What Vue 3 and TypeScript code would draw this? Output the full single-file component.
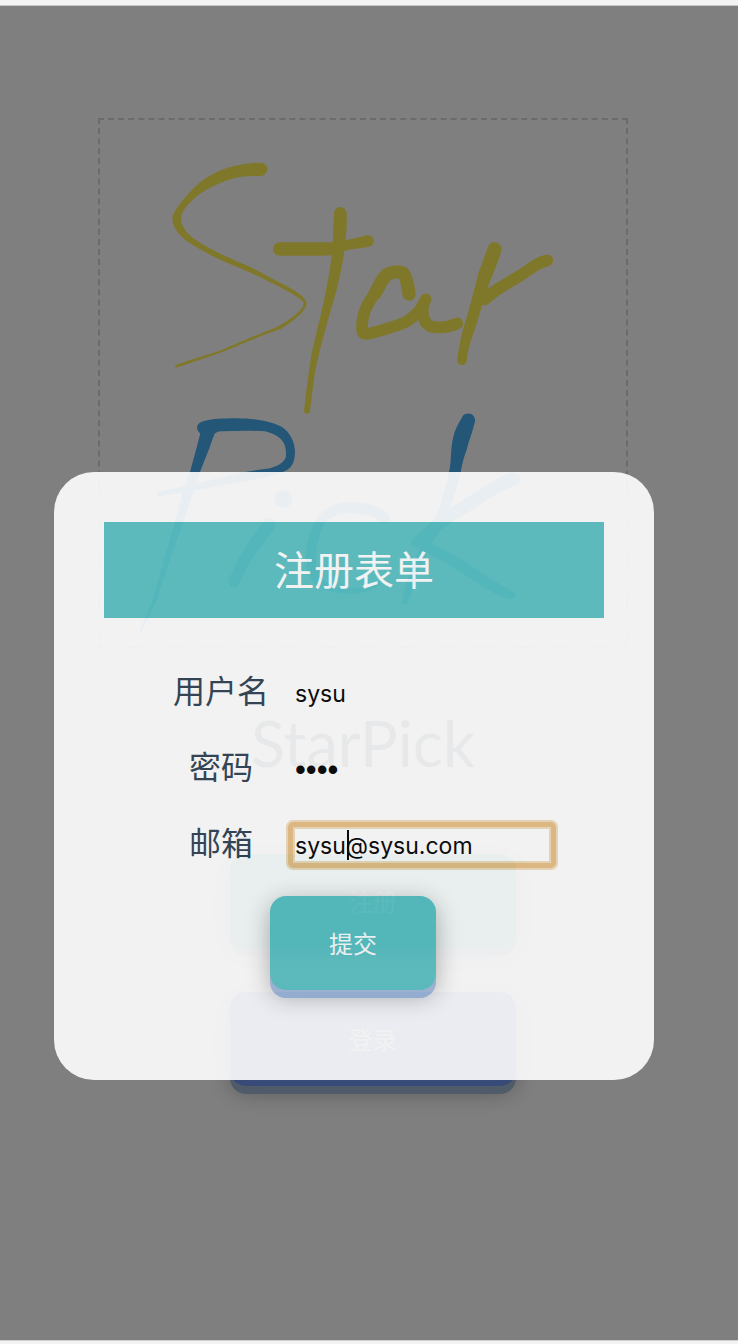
<script setup lang="ts">
import { onMounted, ref } from 'vue'

interface Field {
  id: string
  label: string
  type: string
  value: string
}

const fields = ref<Field[]>([
  { id: 'username', label: '用户名', type: 'text', value: 'sysu' },
  { id: 'password', label: '密码', type: 'password', value: 'sysu' },
  { id: 'email', label: '邮箱', type: 'text', value: 'sysu@sysu.com' },
])

const active = ref('email')

onMounted(() => {
  const input = document.getElementById(active.value) as HTMLInputElement | null
  input?.focus()
  input?.setSelectionRange(4, 4)
})
</script>

<template>
  <div class="app">
    <div class="strip strip-top"></div>
    <main class="page">
      <section class="home">
        <div class="logo">
          <svg viewBox="0 0 1578 1578" role="img" aria-label="StarPick">
            <g fill="#fff056" stroke="none">
              <g transform="translate(-30 -60)">
                <path d="M512 188C420 190 355 220 308 267C270 308 247 338 247 355C247 385 270 410 300 430C370 475 440 500 490 522C540 548 590 568 625 594C638 603 641 606 641 611C636 635 600 658 562 680C520 696 440 730 390 752L300 780L258 794A4 4 0 0 0 262 802L300 790L395 757C460 730 510 708 572 687C612 663 650 632 650 610C650 595 625 578 590 558C550 540 510 515 480 500C420 475 360 450 310 415C285 395 273 375 273 355C275 330 300 305 332 280C380 250 430 231 470 229L512 228A20 20 0 0 0 512 188Z" />
                <path d="M732 340A19 19 0 0 1 770 340C772 380 768 400 766 430C762 470 752 520 740 570C720 640 702 700 685 770C670 830 668 880 660 932A9 9 0 0 1 642 932C648 880 655 820 665 760C680 690 700 620 712 550C722 500 729 440 729 400Z" />
                <path d="M569 427L720 427C760 424 790 416 830 406A17 17 0 0 1 838 440C810 445 790 446 765 452C740 466 720 467 690 467H569A20 20 0 0 1 569 427Z" />
              </g>
              <g transform="translate(720 -60)">
                <path d="M444 442A20 20 0 0 1 484 452C470 500 455 530 440 570C425 620 412 670 395 715C385 745 382 765 380 784A14 14 0 0 1 352 778C357 740 362 710 375 670C390 620 405 560 415 520Z" />
                <path d="M435 570C480 542 500 530 540 506C570 486 590 469 615 465A17 17 0 0 1 628 498C600 504 580 522 545 545C510 565 480 582 455 604C445 614 435 619 422 616Z" />
                <g fill="none" stroke="#fff056" stroke-linecap="round" stroke-linejoin="round">
                  <path stroke-width="40" d="M207 582C205 560 202 540 190 520C175 514 155 514 140 525C120 542 118 562 105 580" />
                  <path stroke-width="35" d="M107 578C80 610 65 645 66 685C66 702 72 704 90 700C130 690 175 678 205 662C235 640 250 620 257 598" />
                  <path stroke-width="35" d="M250 612C246 640 246 670 275 680C300 685 330 680 352 670" />
                </g>
              </g>
            </g>
            <g fill="#48acf0" stroke="none">
              <g transform="translate(-30 840)">
                <path d="M332 96L318 150L300 215L280 270L255 366L210 520L185 610L149 690A3 3 0 0 0 155 694L200 600L240 480L280 366L312 270L330 216L358 145L376 94Z" />
                <path d="M340 64C370 55 400 56 440 55C480 56 530 58 575 80C600 96 615 125 615 158C614 192 600 208 580 215C530 235 470 240 400 256L210 289A6 6 0 0 1 206 276L330 248C390 232 430 224 470 215L540 205C572 195 588 182 588 165C590 125 570 106 525 94C480 91 440 92 400 94C380 94 372 100 370 110L330 100C316 86 318 70 340 64Z" />
                <circle cx="580" cy="297" r="26" />
                <path d="M521 364A18 18 0 0 1 554 382C530 425 495 455 478 490L447 552A15 15 0 0 1 417 540C430 500 465 435 521 364Z" />
                <path d="M900 348C880 320 830 307 780 307C710 307 675 350 658 405C638 460 645 510 670 545C695 575 745 582 790 581C825 580 850 570 872 552L868 545C845 560 820 565 790 564C750 564 715 560 695 535C670 505 674 450 690 405C700 360 730 340 780 340C820 341 850 347 868 363A18 18 0 0 0 900 348Z" />
              </g>
              <g transform="translate(750 840)">
                <path d="M335 54A20 20 0 0 1 374 68C368 95 355 125 350 150C340 175 336 195 332 216C324 250 315 285 300 320C290 360 275 385 258 410C240 435 215 490 200 530L175 606A9 9 0 0 1 157 602C165 560 180 515 195 480C220 425 250 370 270 320C280 280 290 250 297 216C305 190 300 150 310 110C315 90 322 75 335 54Z" />
                <path d="M490 218A20 20 0 0 1 492 258C440 275 395 312 350 340C310 362 270 390 238 417L205 445C185 440 178 425 192 413C230 380 270 345 300 325L400 262C430 244 460 220 490 218Z" />
                <path d="M240 428C280 450 310 462 340 482L420 535L488 575A11 11 0 0 1 482 597C450 592 420 570 400 560L290 490L205 445Z" />
              </g>
            </g>
          </svg>
        </div>
        <h1 class="brand">StarPick</h1>
        <div class="actions">
          <button type="button" class="btn">注册</button>
          <button type="button" class="btn btn-login">登录</button>
        </div>
      </section>

      <div class="overlay">
        <div class="dialog" role="dialog" aria-labelledby="dialog-title">
          <h2 id="dialog-title" class="dialog-title">注册表单</h2>
          <form class="form" @submit.prevent>
            <div v-for="field in fields" :key="field.id" class="row">
              <label :for="field.id">{{ field.label }}</label>
              <div class="control">
                <input
                  :id="field.id"
                  v-model="field.value"
                  :type="field.type"
                  :class="{ active: active === field.id }"
                  autocomplete="off"
                  spellcheck="false"
                  @focus="active = field.id"
                />
                <span v-if="active === field.id" class="caret"></span>
              </div>
            </div>
            <button type="submit" class="btn btn-submit">提交</button>
          </form>
        </div>
      </div>
    </main>
    <div class="strip strip-bottom"></div>
  </div>
</template>

<style>
body {
  margin: 0;
  background: #fff;
}
</style>

<style scoped>
.app {
  display: flex;
  flex-direction: column;
  min-height: 100vh;
  font-family: Inter, "Noto Sans CJK SC", sans-serif;
  font-weight: 400;
  color: #2c3e50;
}

.app *,
.app {
  box-sizing: border-box;
}

.strip {
  background: #f3f3f3;
}

.strip-top {
  height: 6px;
  border-bottom: 1px solid #c6cac6;
}

.strip-bottom {
  height: 4px;
  border-top: 1px solid #d0d0d0;
}

.page {
  position: relative;
  flex: 1;
}

.home {
  display: flex;
  flex-direction: column;
  align-items: center;
  padding: 112px 12px 0 0;
}

.logo {
  width: 100%;
  max-width: 530px;
  aspect-ratio: 1;
  border: 2px dashed #d6d6d6;
}

.logo svg {
  display: block;
  width: 100%;
  height: 100%;
}

.brand {
  margin: 56px 0 0;
  font-family: Lato, sans-serif;
  font-size: 63px;
  font-weight: 400;
  line-height: 78px;
}

.actions {
  display: flex;
  flex-direction: column;
  gap: 44px;
  width: 286px;
  margin: 72px 0 0 20px;
}

.btn {
  height: 94px;
  padding: 0 0 2px;
  border: 0;
  border-radius: 16px;
  background: #59c1c3;
  box-shadow: 0 8px #a0b8da, 0 6px 24px rgba(0, 0, 0, 0.32);
  color: #fff;
  font: inherit;
  font-size: 24px;
}

.btn-login {
  background: #6e94f0;
  box-shadow: 0 8px #9eb6d0, 0 6px 24px rgba(0, 0, 0, 0.32);
}

.overlay {
  position: absolute;
  inset: 0;
  display: flex;
  justify-content: center;
  align-items: flex-start;
  padding: 466px 30px 0 0;
  background: rgba(0, 0, 0, 0.5);
}

.dialog {
  width: 100%;
  max-width: 600px;
  padding: 50px 50px 90px;
  border-radius: 40px;
  background: #fff;
  opacity: 0.9;
}

.dialog-title {
  margin: 0;
  padding-top: 2px;
  background: #59c1c3;
  color: #fff;
  font-size: 40px;
  font-weight: 400;
  line-height: 94px;
  text-align: center;
}

.form {
  display: flex;
  flex-direction: column;
  align-items: center;
  gap: 30px;
  margin-top: 52px;
}

.row {
  display: grid;
  grid-template-columns: 96px 268px;
  gap: 19px;
  margin-left: 21px;
}

.row label {
  font-size: 32px;
  line-height: 44px;
  text-align: center;
  white-space: nowrap;
}

.control {
  position: relative;
}

.control input {
  display: block;
  width: 100%;
  height: 46px;
  padding: 2px 2px 0;
  border: 5px solid transparent;
  border-radius: 5px;
  outline: 0;
  background: transparent;
  color: #000;
  caret-color: transparent;
  font-family: Inter, sans-serif;
  font-size: 23px;
}

.control input[type="password"] {
  font-family: "Liberation Sans", sans-serif;
  font-size: 31px;
}

.control input.active {
  border-color: #e7be82;
  box-shadow: 0 0 0 2px #f0dcbc, inset 0 0 0 2px #f0dcbc;
}

.caret {
  position: absolute;
  top: 8px;
  left: 59px;
  width: 2px;
  height: 30px;
  background: #000;
}

.btn-submit {
  width: 166px;
  margin: -2px 2px 0 0;
}
</style>
